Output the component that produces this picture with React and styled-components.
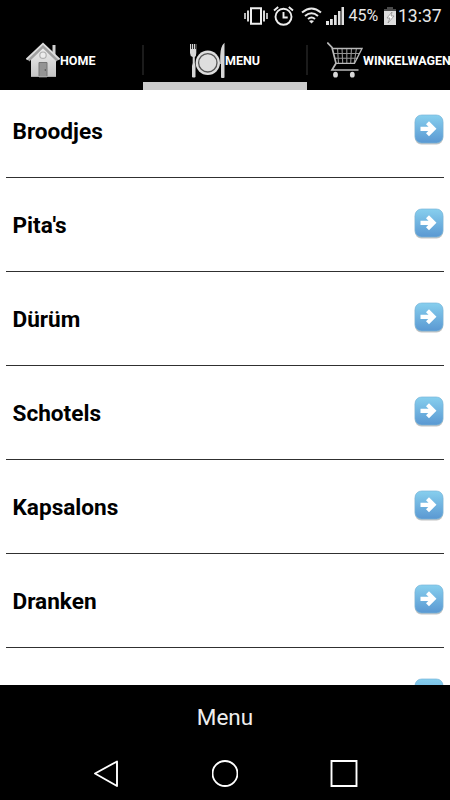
import React from "react";
import styled, { createGlobalStyle } from "styled-components";

const GlobalStyle = createGlobalStyle`
    * {
        box-sizing: border-box;
    }
    body {
        margin: 0;
        background-color: #000000;
        font-family: Roboto, sans-serif;
    }
    ul {
        margin: 0;
        padding: 0;
        list-style: none;
    }
    svg {
        display: block;
        flex-shrink: 0;
    }
`
const Phone = styled.div`
    display: flex;
    flex-direction: column;
    width: 450px;
    height: 800px;
    overflow: hidden;
    background-color: #000000;
    color: #ffffff;
`
const StatusBar = styled.div`
    display: flex;
    align-items: center;
    height: 32px;
    padding-left: 244px;
    flex-shrink: 0;
    color: #e8e8e8;
`
const StatusText = styled.span`
    width: ${(props) => props.$width}px;
    margin-left: ${(props) => props.$gap}px;
    font-size: ${(props) => props.$size}px;
    line-height: 32px;
    white-space: nowrap;
`
const StatusIcon = styled.svg`
    margin-left: ${(props) => props.$gap || 0}px;
    margin-top: -1px;
`
const Tabs = styled.nav`
    display: flex;
    height: 58px;
    flex-shrink: 0;
`
const Tab = styled.div`
    display: flex;
    align-items: flex-start;
    width: ${(props) => props.$width}px;
    height: 58px;
    padding: 10px 0 0 ${(props) => props.$left}px;
    flex-shrink: 0;
    border-bottom: 8px solid ${(props) => (props.$active ? "#cccccc" : "#000000")};
`
const TabLabel = styled.span`
    font-size: 12.500px;
    font-weight: 700;
    line-height: 38px;
    white-space: nowrap;
`
const Divider = styled.div`
    width: 2px;
    height: 30px;
    margin: 13px -1px 0 -1px;
    flex-shrink: 0;
    background-color: #1b1b1b;
`
const List = styled.ul`
    height: 595px;
    flex-shrink: 0;
    overflow: hidden;
    background-color: #ffffff;
    color: #000000;
    & > li:first-child {
        margin-top: -6px;
    }
`
const Row = styled.li`
    display: flex;
    align-items: flex-start;
    justify-content: space-between;
    height: 94px;
    margin: 0 6px;
    padding: 30px 0 0 6.500px;
    border-bottom: 1px solid #303030;
`
const RowLabel = styled.span`
    font-size: 22.600px;
    font-weight: 700;
    line-height: 36px;
`
const Footer = styled.div`
    height: 62px;
    flex-shrink: 0;
    text-align: center;
    font-size: 22.500px;
    line-height: 65px;
    color: #eeeeee;
`
const NavBar = styled.div`
    display: flex;
    align-items: center;
    height: 53px;
    padding-left: 93px;
    gap: 92px;
`

const items = ["Broodjes", "Pita's", "Dürüm", "Schotels", "Kapsalons", "Dranken"];

const HouseIcon = () => (
    <svg width="34" height="38" viewBox="0 0 34 38">
        <defs>
            <linearGradient id="wall" x1="0" y1="0" x2="0" y2="1">
                <stop offset="0" stopColor="#eeeeee" />
                <stop offset="1" stopColor="#c4c4c4" />
            </linearGradient>
        </defs>
        <path d="M26.500 3h3v11l-3-3z" fill="#d0d0d0" />
        <path d="M5 17 17 5l13 12v18H5z" fill="url(#wall)" />
        <path d="M2.500 18.500 17 4.500l14.500 14" fill="none" stroke="#a0a0a0" strokeWidth="2.500" />
        <path d="M.5 17.500 17 1.800l16.500 15.700" fill="none" stroke="#dedede" strokeWidth="2" />
        <circle cx="17" cy="13.200" r="3.200" fill="#ececec" stroke="#b0b0b0" strokeWidth="1.200" />
        <path d="M13 20.500h8V35h-8z" fill="#949494" stroke="#747474" />
        <circle cx="19.300" cy="28" r=".7" fill="#444444" />
        <path d="M5 34.500h25" stroke="#a8a8a8" />
    </svg>
)

const PlateIcon = () => (
    <svg width="36" height="38" viewBox="0 0 36 38">
        <path d="M1 2h1.200v5h.8V2h1.100v5h.8V2H6v5h.7V2h.6v9q0 3-1.500 4v6l.7 3v11q-1.700 1.200-3.500 0V24l.7-3v-6Q1 14 1 11z" fill="#d6d6d6" />
        <circle cx="18.800" cy="20.800" r="12.200" fill="#dddddd" />
        <circle cx="18.800" cy="20.800" r="9.200" fill="#dedede" stroke="#555555" strokeWidth="1.300" />
        <path d="M35.500.8v34.700q-1.800 1.200-3.500 0V22h-.8v-8Q31.500 4 35.500.8z" fill="#d6d6d6" />
    </svg>
)

const CartIcon = () => (
    <svg width="36" height="38" viewBox="0 0 36 38" fill="none">
        <path d="M6 11.500h27M7 16.300h24M10.500 6l1 15M15 6l.7 15M19.800 6v15M24.500 6l-.8 15M29.500 6l-2.300 15" stroke="#929292" strokeWidth="1.100" />
        <path d="M.3.500 5 5.500 9 21.300 5 28H31.500" stroke="#b9b9b9" strokeWidth="1.700" />
        <path d="M5 6.500h30L27.500 21.300H9" stroke="#b9b9b9" strokeWidth="1.300" />
        <ellipse cx="8.500" cy="32.700" rx="2.400" ry="2.900" fill="#d8d8d8" />
        <ellipse cx="25.300" cy="32.700" rx="2.400" ry="2.900" fill="#d8d8d8" />
    </svg>
)

const ArrowIcon = () => (
    <svg width="30" height="32" viewBox="0 0 30 32">
        <defs>
            <linearGradient id="arrowBg" x1="0" y1="0" x2="0" y2="1">
                <stop offset="0" stopColor="#87cfee" />
                <stop offset="1" stopColor="#5a98d2" />
            </linearGradient>
        </defs>
        <rect x=".8" y="2" width="28.400" height="28.400" rx="6.500" fill="#c4c4c4" />
        <rect x="1" y="1" width="28" height="28" rx="6.500" fill="url(#arrowBg)" stroke="#78b6da" strokeWidth=".7" />
        <path d="M6.500 14.800H20M13.500 8.800l6 6-6 6" fill="none" stroke="#ffffff" strokeWidth="4.200" />
    </svg>
)

function App() {
    return (
        <Phone>
            <GlobalStyle />
            <StatusBar>
                <StatusIcon width="24" height="18" viewBox="0 0 24 18" fill="none" stroke="#eeeeee">
                    <path d="M7 1.200h10v15.600H7z" strokeWidth="2" />
                    <path d="M4 3.500v11M20 3.500v11" strokeWidth="1.800" />
                    <path d="M1 6v6M23 6v6" strokeWidth="1.500" />
                </StatusIcon>
                <StatusIcon $gap={5} width="21" height="20" viewBox="0 0 21 20" fill="none" stroke="#eeeeee" strokeWidth="1.900">
                    <circle cx="10.500" cy="10.800" r="8" />
                    <path d="M10.500 6v5.500h4.200M1 4.500 5.200 1M15.800 1 20 4.500" />
                </StatusIcon>
                <StatusIcon $gap={7} width="21" height="18" viewBox="0 0 21 18" fill="none" stroke="#e8e8e8" strokeWidth="2">
                    <path d="M1 5.500q9.500-8 19 0M4 9q6.500-5.500 13 0M7 12q3.500-3 7 0" />
                    <path d="m8 14 2.500 2.500L13 14q-2.500-1.500-5 0z" fill="#e8e8e8" stroke="none" />
                </StatusIcon>
                <StatusIcon $gap={4} width="18" height="18" viewBox="0 0 18 18" fill="#e2e2e2">
                    <path d="M0 14h3v4H0zM4 12h2.800v6H4zM8 8h2.700v10H8zM12 4h2.500v14H12zM15.500 0H18v18h-2.500z" />
                </StatusIcon>
                <StatusText $width={31} $gap={4.500} $size={16}>45%</StatusText>
                <StatusIcon $gap={4.500} width="12" height="18" viewBox="0 0 12 18">
                    <path d="M3 0h6v2h3v3H0V2h3z" fill="#4a4a4a" />
                    <path d="M0 4h12v14H0z" fill="#dddddd" />
                    <path d="M8 5 3 11h3l-2 5 6-7H7z" fill="#ffffff" stroke="#888888" strokeWidth=".7" />
                </StatusIcon>
                <StatusText $width={44} $gap={2} $size={17.500}>13:37</StatusText>
            </StatusBar>
            <Tabs>
                <Tab $width={143} $left={26}>
                    <HouseIcon />
                    <TabLabel>HOME</TabLabel>
                </Tab>
                <Divider />
                <Tab $width={164} $left={46} $active>
                    <PlateIcon />
                    <TabLabel>MENU</TabLabel>
                </Tab>
                <Divider />
                <Tab $width={143} $left={20}>
                    <CartIcon />
                    <TabLabel>WINKELWAGEN</TabLabel>
                </Tab>
            </Tabs>
            <List>
                {items.map((item) => (
                    <Row key={item}>
                        <RowLabel>{item}</RowLabel>
                        <ArrowIcon />
                    </Row>
                ))}
                <Row>
                    <RowLabel />
                    <ArrowIcon />
                </Row>
            </List>
            <Footer>Menu</Footer>
            <NavBar>
                <svg width="27" height="30" viewBox="0 0 27 30" fill="none" stroke="#ffffff" strokeWidth="1.900">
                    <path d="M2 14.500 24 2.500v24.500z" strokeLinejoin="round" />
                </svg>
                <svg width="26" height="30" viewBox="0 0 26 30" fill="none" stroke="#ffffff" strokeWidth="1.900">
                    <circle cx="13" cy="14.500" r="12.500" />
                </svg>
                <svg width="28" height="30" viewBox="0 0 28 30" fill="none" stroke="#ffffff" strokeWidth="1.900">
                    <path d="M1.500 2h25v25h-25z" />
                </svg>
            </NavBar>
        </Phone>
    )
}

export default App;
